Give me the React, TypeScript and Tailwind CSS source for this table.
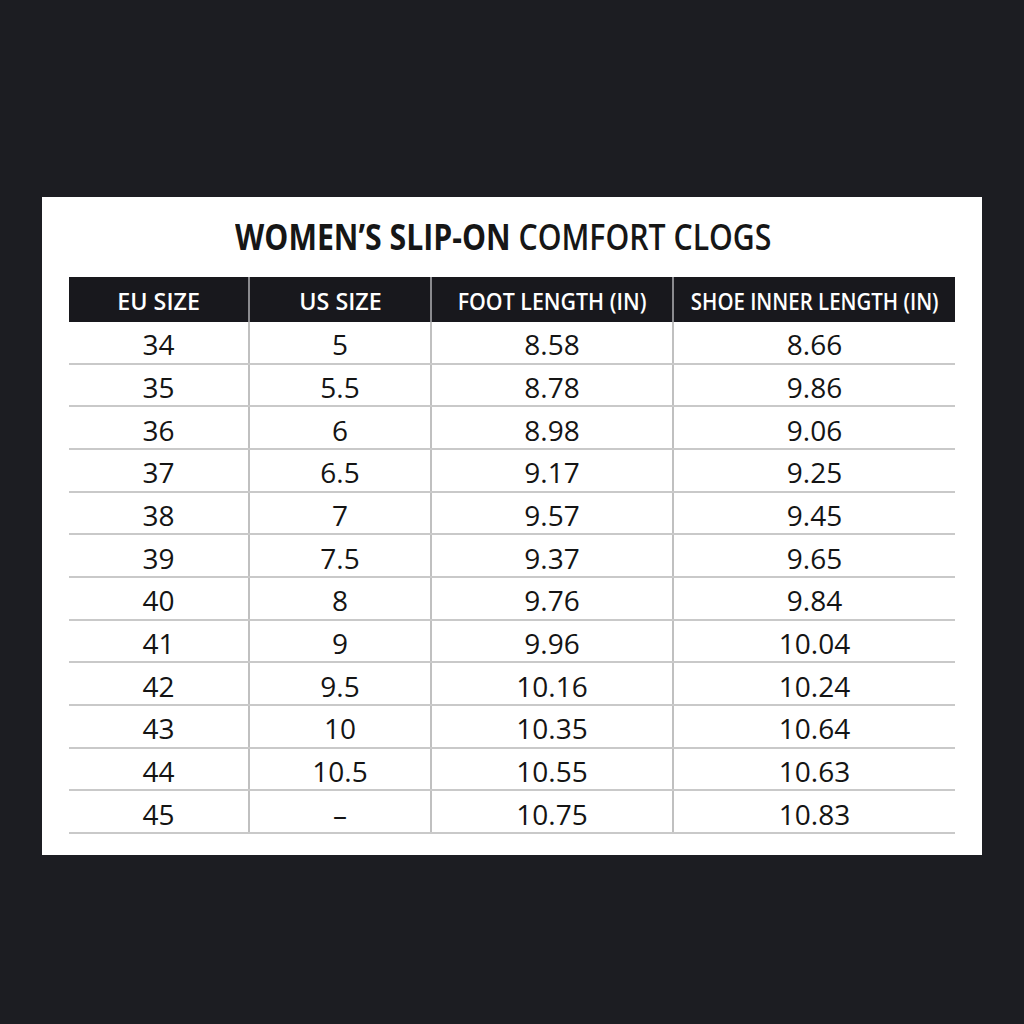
import React from 'react';

const rows: [string, string, string, string][] = [
  ['34', '5', '8.58', '8.66'],
  ['35', '5.5', '8.78', '9.86'],
  ['36', '6', '8.98', '9.06'],
  ['37', '6.5', '9.17', '9.25'],
  ['38', '7', '9.57', '9.45'],
  ['39', '7.5', '9.37', '9.65'],
  ['40', '8', '9.76', '9.84'],
  ['41', '9', '9.96', '10.04'],
  ['42', '9.5', '10.16', '10.24'],
  ['43', '10', '10.35', '10.64'],
  ['44', '10.5', '10.55', '10.63'],
  ['45', '–', '10.75', '10.83'],
];

const headers = [
  { label: 'EU SIZE', cell: 'w-[179px]', text: 'scale-x-[0.97]' },
  { label: 'US SIZE', cell: 'w-[182px] border-l-2 border-[#8a8a8e]', text: 'scale-x-[0.97]' },
  { label: 'FOOT LENGTH (IN)', cell: 'w-[242px] border-l-2 border-[#8a8a8e]', text: 'scale-x-[0.89]' },
  { label: 'SHOE INNER LENGTH (IN)', cell: 'w-[283px] border-l-2 border-[#8a8a8e]', text: 'scale-x-[0.85]' },
];
const widths = ['w-[179px]', 'w-[182px]', 'w-[242px]', 'w-[283px]'];

const App = () => {
  return (
    <div className="min-h-screen w-full bg-[#1c1d22] pt-[197px] px-[42px] font-['Open_Sans',sans-serif]">
      <div className="w-[940px] bg-white pt-[18px] pb-[21px] px-[27px] flex flex-col items-center">
        {/* Title */}
        <h1 className="inline-block whitespace-nowrap text-[36px] leading-[44px] text-[#161616] scale-x-[0.84] -ml-[18px]">
          <span className="font-bold">WOMEN’S SLIP-ON</span>{' '}
          <span className="font-semibold">COMFORT CLOGS</span>
        </h1>

        {/* Table */}
        <div className="mt-[18px] w-[886px]">
          <div className="flex h-[45px] bg-[#18181d]">
            {headers.map((h) => (
              <div
                key={h.label}
                className={`${h.cell} flex items-center justify-center text-white pt-[2px] whitespace-nowrap`}
              >
                <span className={`${h.text} inline-block text-[24px] font-semibold`}>{h.label}</span>
              </div>
            ))}
          </div>
          {rows.map((r) => (
            <div key={r[0]} className="flex h-[42.67px] border-b-2 border-[#c9c9c9]">
              {r.map((c, i) => (
                <div
                  key={i}
                  className={`${widths[i]} flex items-center justify-center text-[28px] text-[#141414] pt-[4px] ${
                    i > 0 ? 'border-l-2 border-[#c0c0c0]' : ''
                  }`}
                >
                  {c}
                </div>
              ))}
            </div>
          ))}
        </div>
      </div>
    </div>
  );
};

export default App;
